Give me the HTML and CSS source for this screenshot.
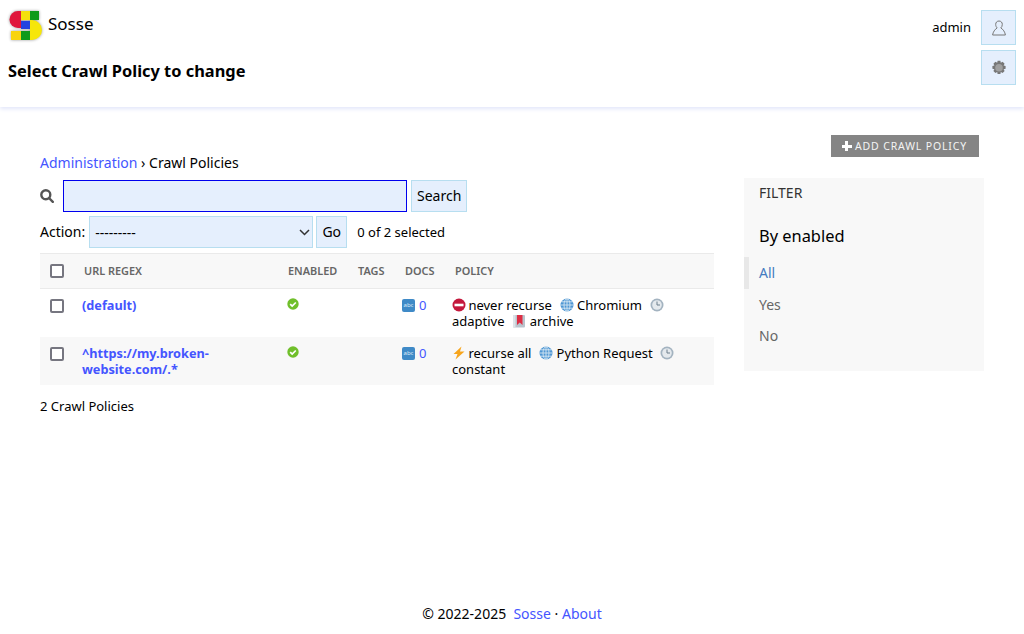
FILE: index.html
```html
<!DOCTYPE html>
<html lang="en">
<head>
    <meta charset="UTF-8">
    <title>Select Crawl Policy to change | Sosse</title>
    <link rel="stylesheet" href="styles.css">
</head>
<body>
    <header class="top-bar">
        <div class="top-left">
            <a class="brand" href="#">
                <svg class="logo" viewBox="0 0 34 34" width="34" height="34">
                    <path d="M13 3H10a8.500 8.500 0 0 0 0 17h3z" fill="#e0173c"/>
                    <rect x="13" y="3" width="9" height="9" fill="#f4e10c"/>
                    <rect x="22" y="3" width="9" height="9" fill="#0f9a1a"/>
                    <rect x="13" y="13" width="9" height="8" fill="#2343e0"/>
                    <path d="M22 12h2a10 10 0 0 1 0 20h-2z" fill="#f6e60a"/>
                    <rect x="3" y="23" width="10" height="9" fill="#f8d40e"/>
                    <rect x="13" y="23" width="9" height="9" fill="#0f9a1a"/>
                </svg>
                <span class="brand-name">Sosse</span>
            </a>
            <h1>Select Crawl Policy to change</h1>
        </div>
        <div class="top-right">
            <div class="user-row">
                <span class="user-name">admin</span>
                <a class="icon-btn" href="#">
                    <svg viewBox="0 0 16 16" width="16" height="16" fill="none" stroke="#777" stroke-width="1">
                        <path d="M8 1c-2 0-3.300 1.400-3.300 3.400 0 1.600.6 2.800 1.500 3.500C3.900 9.300 2 12 1.600 15h12.800C14 12 12.100 9.300 9.800 7.900c.9-.7 1.500-1.900 1.500-3.500C11.300 2.400 10 1 8 1z"/>
                    </svg>
                </a>
            </div>
            <a class="icon-btn" href="#">
                <svg viewBox="0 0 16 16" width="16" height="16">
                    <path d="M6.600.8h2.800l.4 2 1.800-1 2 2-1 1.800 2 .4v2.800l-2 .4 1 1.800-2 2-1.800-1-.4 2H6.600l-.4-2-1.800 1-2-2 1-1.800-2-.4V6l2-.4-1-1.800 2-2 1.800 1z" fill="#777"/>
                    <circle cx="8" cy="7.800" r="3.800" fill="#a0a0a0"/>
                </svg>
            </a>
        </div>
    </header>

    <main class="content">
        <div class="tools">
            <a class="add-btn" href="#"><span class="plus"></span>ADD CRAWL POLICY</a>
        </div>
        <div class="columns">
            <section class="changelist">
                <div class="breadcrumbs"><a href="#">Administration</a> › Crawl Policies</div>
                <form class="search-row">
                    <svg class="search-icon" viewBox="0 0 14 14" width="14" height="14" fill="none" stroke="#555" stroke-width="2.400">
                        <circle cx="5.800" cy="5.800" r="4.500"/>
                        <path d="M9 9l3.800 3.800" stroke-linecap="round"/>
                    </svg>
                    <input class="search-input" type="text">
                    <button class="btn search-btn" type="button">Search</button>
                </form>
                <div class="action-row">
                    <label>Action:</label>
                    <div class="select-box">
                        <span>---------</span>
                        <svg viewBox="0 0 11 7" width="11" height="7" fill="none" stroke="#333" stroke-width="1.500"><path d="M1 1l4.500 4.500L10 1"/></svg>
                    </div>
                    <button class="btn go-btn" type="button">Go</button>
                    <span class="selected">0 of 2 selected</span>
                </div>

                <table>
                    <thead>
                        <tr>
                            <th class="col-check"><span class="checkbox"></span></th>
                            <th class="col-url">URL Regex</th>
                            <th class="col-enabled">Enabled</th>
                            <th class="col-tags">Tags</th>
                            <th class="col-docs">Docs</th>
                            <th class="col-policy">Policy</th>
                        </tr>
                    </thead>
                    <tbody>
                        <tr>
                            <td class="col-check"><span class="checkbox"></span></td>
                            <td class="col-url"><a href="#">(default)</a></td>
                            <td class="col-enabled">
                                <svg class="tick" viewBox="0 0 12 12" width="12" height="12"><circle cx="6" cy="6" r="5.700" fill="#70bf2b"/><path d="M3.200 6.100l2 2 3.600-3.600" fill="none" stroke="#fff" stroke-width="1.700"/></svg>
                            </td>
                            <td class="col-tags"></td>
                            <td class="col-docs">
                                <span class="abc">abc</span><a href="#">0</a>
                            </td>
                            <td class="col-policy">
                                <svg class="emoji emoji-lead" viewBox="0 0 14 14"><circle cx="7" cy="7" r="6.500" fill="#c4183c"/><rect x="2.500" y="5.700" width="9" height="2.600" fill="#fff"/></svg>
                                never recurse&nbsp;
                                <svg class="emoji emoji-late" viewBox="0 0 14 14"><use href="#globe"/></svg>
                                Chromium&nbsp;
                                <svg class="emoji emoji-late" viewBox="0 0 14 14"><use href="#clock"/></svg>
                                adaptive&nbsp;
                                <svg class="emoji emoji-late" viewBox="0 0 14 14"><rect x="1" y="1" width="12" height="12.500" rx="1" fill="#b9c4cd"/><rect x="1" y="1" width="2.500" height="12.500" fill="#dde3e8"/><path d="M5 1h5.500v10L7.750 8.500 5 11z" fill="#dd2e44"/></svg>
                                archive
                            </td>
                        </tr>
                        <tr class="row-alt">
                            <td class="col-check"><span class="checkbox"></span></td>
                            <td class="col-url"><a href="#">^https://my.broken-website.com/.*</a></td>
                            <td class="col-enabled">
                                <svg class="tick" viewBox="0 0 12 12" width="12" height="12"><circle cx="6" cy="6" r="5.700" fill="#70bf2b"/><path d="M3.200 6.100l2 2 3.600-3.600" fill="none" stroke="#fff" stroke-width="1.700"/></svg>
                            </td>
                            <td class="col-tags"></td>
                            <td class="col-docs">
                                <span class="abc">abc</span><a href="#">0</a>
                            </td>
                            <td class="col-policy">
                                <svg class="emoji emoji-lead" viewBox="0 0 14 14"><path d="M9.500.5L1.500 8h4L3.500 13.500 12.500 5.500H8z" fill="#f7a51d"/></svg>
                                recurse all&nbsp;
                                <svg class="emoji emoji-late" viewBox="0 0 14 14"><use href="#globe"/></svg>
                                Python Request&nbsp;
                                <svg class="emoji" viewBox="0 0 14 14"><use href="#clock"/></svg>
                                constant
                            </td>
                        </tr>
                    </tbody>
                </table>
                <p class="paginator">2 Crawl Policies</p>
            </section>

            <aside class="filter">
                <h2>FILTER</h2>
                <h3>By enabled</h3>
                <ul>
                    <li class="selected-filter"><a href="#">All</a></li>
                    <li><a href="#">Yes</a></li>
                    <li><a href="#">No</a></li>
                </ul>
            </aside>
        </div>
    </main>

    <footer class="footer">
        © 2022-2025 &nbsp;<a href="#">Sosse</a> · <a href="#">About</a>
    </footer>

    <svg class="defs" width="0" height="0">
        <symbol id="globe" viewBox="0 0 14 14">
            <circle cx="7" cy="7" r="6.500" fill="#4f97d4"/>
            <g fill="none" stroke="#d5e6f3" stroke-width=".9">
                <ellipse cx="7" cy="7" rx="3" ry="6.300"/>
                <path d="M7 .5v13M.7 7h12.600M1.500 3.800h11M1.500 10.200h11"/>
            </g>
        </symbol>
        <symbol id="clock" viewBox="0 0 14 14">
            <circle cx="7" cy="7" r="6.500" fill="#a3b3c0"/>
            <circle cx="7" cy="7" r="4.800" fill="#e4e9ed"/>
            <path d="M7 3.500V7h3" fill="none" stroke="#6d7f8c" stroke-width="1"/>
        </symbol>
    </svg>
</body>
</html>
```

FILE: styles.css
```css
* {
    box-sizing: border-box;
}

html, body {
    height: 100%;
}

body {
    margin: 0;
    display: flex;
    flex-direction: column;
    background-color: #fff;
    color: #000;
    font-family: "Noto Sans", sans-serif;
    font-size: 13px;
    overflow: hidden;
}

a {
    color: #4455ff;
    text-decoration: none;
}

.defs {
    position: absolute;
}

.top-bar {
    height: 107px;
    display: flex;
    justify-content: space-between;
    padding: 8px 8px 0 8px;
    box-shadow: 0 2px 4px #e2e6fa;
}

.brand {
    display: flex;
    align-items: center;
    gap: 6px;
    color: #000;
}

.logo {
    display: block;
    filter: drop-shadow(0 0 1.500px #999);
}

.brand-name {
    font-size: 17px;
    position: relative;
    top: -2px;
}

h1 {
    margin: 16px 0 0 0;
    font-size: 16.400px;
    line-height: 26px;
    font-weight: 700;
}

.top-right {
    display: flex;
    flex-direction: column;
    align-items: flex-end;
    gap: 5px;
    padding-top: 2px;
}

.user-row {
    display: flex;
    align-items: center;
    gap: 10px;
}

.user-name {
    position: relative;
    top: -1px;
}

.icon-btn {
    width: 35px;
    height: 35px;
    display: flex;
    align-items: center;
    justify-content: center;
    background-color: #e5effd;
    border: 1px solid #b7def0;
}

.content {
    flex: 1;
    padding: 28px 40px 0 40px;
}

.tools {
    display: flex;
    justify-content: flex-end;
    padding-right: 5px;
}

.add-btn {
    width: 148px;
    height: 22px;
    display: flex;
    align-items: center;
    justify-content: center;
    gap: 3px;
    background-color: #858585;
    color: #f4f4f4;
    font-size: 10.500px;
    letter-spacing: .85px;
    padding-right: 1px;
}

.plus {
    width: 10px;
    height: 10px;
    background:
        linear-gradient(#fff, #fff) center / 10px 3px no-repeat,
        linear-gradient(#fff, #fff) center / 3px 10px no-repeat;
}

.columns {
    display: flex;
    gap: 30px;
    margin-right: -5px;
}

.changelist {
    width: 674px;
}

.breadcrumbs {
    font-size: 14px;
    line-height: 19px;
    margin-top: -4px;
    margin-bottom: 8px;
}

.breadcrumbs a {
    font-size: 14px;
}

.search-row, .action-row {
    display: flex;
    align-items: center;
    height: 32px;
}

.search-icon {
    margin-right: 9px;
}

.search-input {
    width: 344px;
    height: 32px;
    background-color: #e5effd;
    border: 1px solid #0000ee;
    outline: none;
    padding: 0 6px;
    margin-right: 4px;
}

.btn {
    height: 32px;
    background-color: #e5effd;
    border: 1px solid #b7def0;
    font-family: inherit;
    font-size: 14px;
    color: #000;
    padding: 0 5px 2px 5px;
}

.action-row {
    margin-top: 4px;
    font-size: 14px;
}

.action-row label {
    position: relative;
    top: -1px;
}

.select-box {
    width: 224px;
    height: 32px;
    margin-left: 4px;
    margin-right: 3px;
    padding: 0 2px 0 5px;
    display: flex;
    align-items: center;
    justify-content: space-between;
    background-color: #e5effd;
    border: 1px solid #b7def0;
    font-size: 14px;
}

.go-btn {
    width: 31px;
    padding: 0 0 2px 0;
}

.selected {
    margin-left: 10px;
    font-size: 13px;
}

table {
    width: 674px;
    margin-top: 5px;
    border-collapse: collapse;
    table-layout: fixed;
}

thead th {
    height: 35px;
    padding: 0 0 1px 0;
    background-color: #f8f8f8;
    border-top: 1px solid #eaeaea;
    border-bottom: 1px solid #eaeaea;
    color: #666;
    font-size: 10.900px;
    font-weight: 600;
    text-align: left;
    text-transform: uppercase;
    vertical-align: middle;
}

tbody td {
    padding: 8px 2px 0 2px;
    height: 48px;
    vertical-align: top;
    line-height: 16px;
    font-size: 13px;
}

.row-alt td {
    background-color: #f8f8f8;
}

.checkbox {
    display: block;
    width: 14px;
    height: 14px;
    margin-left: 10px;
    background-color: #fff;
    border: 2px solid #767680;
    border-radius: 2px;
}

tbody .col-check {
    padding-left: 0;
    padding-top: 10px;
}

.col-check {
    width: 42px;
}

.col-url {
    width: 204px;
}

thead .col-url {
    padding-left: 2px;
}

tbody .col-url {
    padding: 8px 30px 0 0;
}

tbody .col-url a {
    font-size: 12.700px;
    font-weight: 700;
}

.col-enabled {
    width: 70px;
}

thead .col-enabled, thead .col-tags {
    padding-left: 2px;
}

.tick {
    display: block;
}

tbody .col-enabled {
    padding: 9px 0 0 1px;
}

.col-tags {
    width: 46px;
}

.col-docs {
    width: 50px;
}

thead .col-docs, thead .col-policy {
    padding-left: 3px;
}

tbody .col-docs {
    padding-left: 0;
}

.abc {
    display: inline-block;
    width: 13px;
    height: 13px;
    margin-right: 4px;
    vertical-align: -2px;
    background-color: #3f8ac7;
    border-radius: 2px;
    color: #dcebf7;
    font-size: 6px;
    line-height: 13px;
    text-align: center;
    overflow: hidden;
}

tbody .col-policy {
    padding-left: 0;
    padding-right: 30px;
}

.emoji {
    display: inline-block;
    width: 14px;
    height: 14px;
    vertical-align: -2px;
}

.emoji-lead {
    margin-right: -1px;
}

.emoji-late {
    margin-left: 1px;
}

.paginator {
    margin: 13px 0 0 0;
    line-height: 17px;
    font-size: 13px;
}

.filter {
    width: 240px;
    height: 193px;
    margin-top: 21px;
    background-color: #f8f8f8;
    padding: 5px 0 0 0;
}

.filter h2 {
    margin: 0 0 0 15px;
    font-size: 14px;
    line-height: 20px;
    font-weight: 400;
    color: #333;
}

.filter h3 {
    margin: 23px 0 0 15px;
    font-size: 16.400px;
    line-height: 20px;
    font-weight: 400;
}

.filter ul {
    list-style: none;
    margin: 11px 0 0 0;
    padding: 0;
}

.filter li {
    height: 31.500px;
    padding-left: 15px;
    display: flex;
    align-items: center;
    font-size: 14px;
}

.filter li a {
    color: #666;
}

.filter li.selected-filter {
    border-left: 5px solid #e8e8e8;
    padding-left: 10px;
}

.filter li.selected-filter a {
    color: #447cc0;
}

.footer {
    height: 40px;
    text-align: center;
    font-size: 14px;
    line-height: 20px;
    padding-top: 10px;
}
```
